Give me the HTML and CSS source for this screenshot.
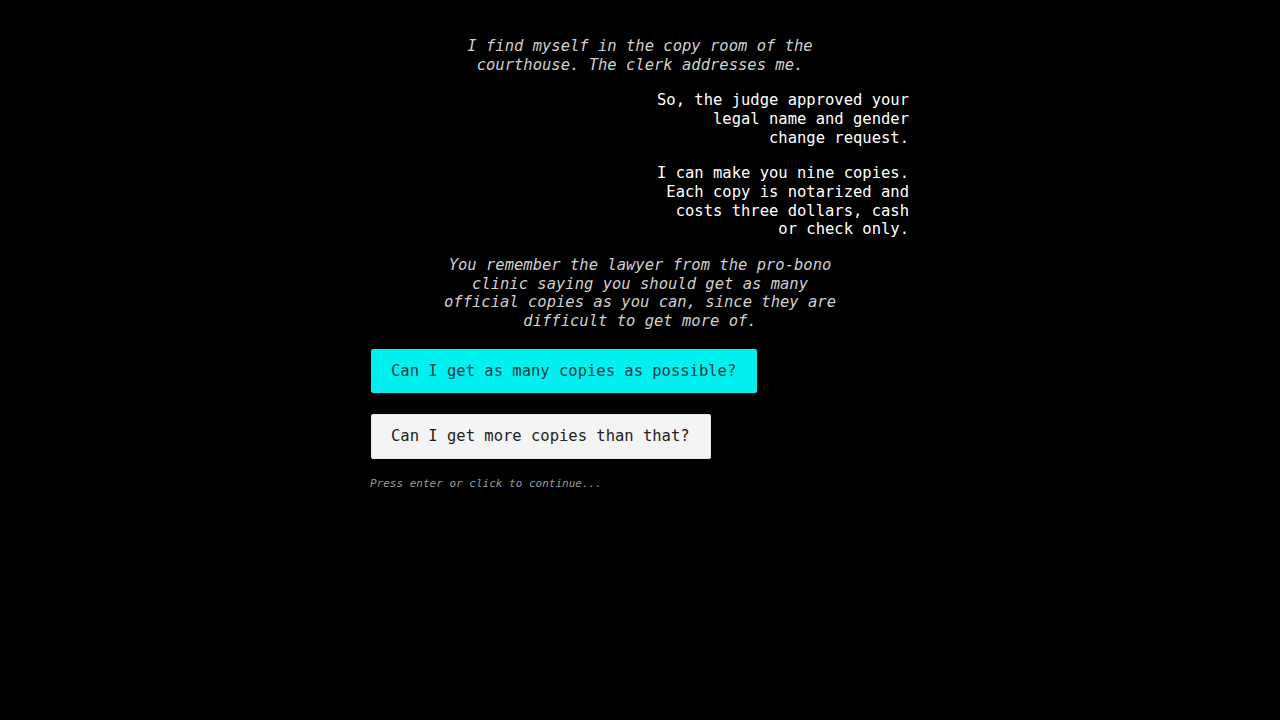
FILE: index.html
```html
<!DOCTYPE html>
<html>
<head>
<meta charset="utf-8">
<link rel="stylesheet" href="styles.css">
</head>
<body>
<main class="story">
  <p class="narration">I find myself in the copy room of the courthouse. The clerk addresses me.</p>
  <p class="dialogue">So, the judge approved your legal name and gender change request.</p>
  <p class="dialogue">I can make you nine copies. Each copy is notarized and costs three dollars, cash or check only.</p>
  <p class="narration">You remember the lawyer from the pro-bono clinic saying you should get as many official copies as you can, since they are difficult to get more of.</p>
  <div class="choices">
    <button class="choice choice-active">Can I get as many copies as possible?</button>
    <button class="choice">Can I get more copies than that?</button>
  </div>
  <p class="hint">Press enter or click to continue...</p>
</main>
</body>
</html>
```
FILE: styles.css
```css
html, body {
  margin: 0;
  padding: 0;
  background: #000;
  height: 100%;
}
body {
  font-family: "DejaVu Sans Mono", "Liberation Mono", monospace;
  font-size: 15.5px;
  line-height: 18.67px;
  color: #fff;
}
.story {
  width: 540px;
  margin: 0 auto;
  padding-top: 37px;
}
.story p {
  margin: 0 0 17px 0;
}
.narration {
  width: 402px;
  margin-left: auto !important;
  margin-right: auto !important;
  text-align: center;
  font-style: italic;
  color: #cfcfcf;
}
.dialogue {
  width: 256px;
  margin-left: auto !important;
  margin-right: 1px !important;
  text-align: right;
  color: #fff;
}
.choices {
  display: flex;
  flex-direction: column;
  align-items: flex-start;
  gap: 21px;
  margin-top: 18px;
}
.choice {
  font-family: inherit;
  font-size: 15.5px;
  line-height: 18.67px;
  padding: 12px 20px 12px 19px;
  border: 1px solid #e6e6e6;
  border-radius: 2px;
  background: #f4f4f4;
  color: #222;
  margin-left: 1px;
}
.choice-active {
  background: #00f0f0;
  border-color: #00f0f0;
  color: #1c3f40;
}
.story p.hint {
  margin-top: 18px;
  font-size: 11px;
  line-height: 13px;
  font-style: italic;
  color: #9a9a9a;
}
```
